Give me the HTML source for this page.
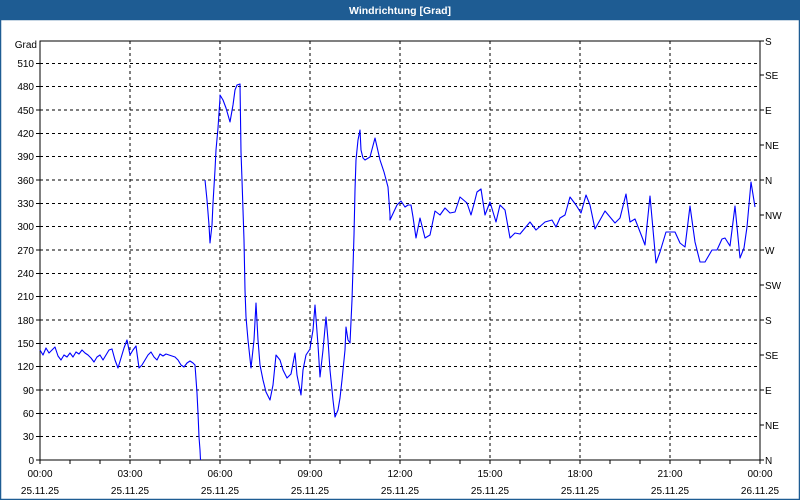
<!DOCTYPE html>
<html><head><meta charset="utf-8"><style>
html,body{margin:0;padding:0;background:#fff}
svg{display:block}
text{font-family:"Liberation Sans",sans-serif;font-size:10px;fill:#000}
</style></head><body>
<svg width="800" height="500" viewBox="0 0 800 500" xmlns="http://www.w3.org/2000/svg">
<rect x="0" y="0" width="800" height="500" fill="#fff"/>
<rect x="0" y="0" width="800" height="20" fill="#1e5c93"/>
<rect x="0.5" y="19.5" width="799" height="480" fill="none" stroke="#1e5c93" stroke-width="1.5"/>
<text x="400" y="14" text-anchor="middle" style="font-weight:bold;fill:#fff;font-size:10.5px">Windrichtung [Grad]</text>
<g stroke="#000" stroke-width="1" stroke-dasharray="3,3" fill="none" shape-rendering="crispEdges">
<path d="M40 436.7H760M40 413.3H760M40 390H760M40 366.7H760M40 343.3H760M40 320H760M40 296.7H760M40 273.3H760M40 250H760M40 226.7H760M40 203.3H760M40 180H760M40 156.7H760M40 133.3H760M40 110H760M40 86.7H760M40 63.3H760"/>
<path d="M130 41V460M220 41V460M310 41V460M400 41V460M490 41V460M580 41V460M670 41V460"/>
</g>
<g stroke="#000" stroke-width="1" fill="none" shape-rendering="crispEdges">
<path d="M40 41H760V460H40ZM36 460H40M36 436.7H40M36 413.3H40M36 390H40M36 366.7H40M36 343.3H40M36 320H40M36 296.7H40M36 273.3H40M36 250H40M36 226.7H40M36 203.3H40M36 180H40M36 156.7H40M36 133.3H40M36 110H40M36 86.7H40M36 63.3H40"/>
<path d="M760 41H764M760 75H764M760 110H764M760 145H764M760 180H764M760 215H764M760 250H764M760 285H764M760 320H764M760 355H764M760 390H764M760 425H764M760 460H764"/>
<path d="M40 460V464M70 460V464M100 460V464M130 460V464M160 460V464M190 460V464M220 460V464M250 460V464M280 460V464M310 460V464M340 460V464M370 460V464M400 460V464M430 460V464M460 460V464M490 460V464M520 460V464M550 460V464M580 460V464M610 460V464M640 460V464M670 460V464M700 460V464M730 460V464M760 460V464"/>
</g>
<g text-anchor="end">
<text x="37" y="48">Grad</text>
<text x="34" y="67">510</text><text x="34" y="90">480</text><text x="34" y="114">450</text><text x="34" y="137">420</text><text x="34" y="160">390</text><text x="34" y="184">360</text><text x="34" y="207">330</text><text x="34" y="230">300</text><text x="34" y="254">270</text><text x="34" y="277">240</text><text x="34" y="300">210</text><text x="34" y="324">180</text><text x="34" y="347">150</text><text x="34" y="370">120</text><text x="34" y="394">90</text><text x="34" y="417">60</text><text x="34" y="440">30</text><text x="34" y="464">0</text>
</g>
<g>
<text x="765" y="45">S</text><text x="765" y="79">SE</text><text x="765" y="114">E</text><text x="765" y="149">NE</text><text x="765" y="184">N</text><text x="765" y="219">NW</text><text x="765" y="254">W</text><text x="765" y="289">SW</text><text x="765" y="324">S</text><text x="765" y="359">SE</text><text x="765" y="394">E</text><text x="765" y="429">NE</text><text x="765" y="464">N</text>
</g>
<g text-anchor="middle">
<text x="40" y="477">00:00</text><text x="130" y="477">03:00</text><text x="220" y="477">06:00</text><text x="310" y="477">09:00</text><text x="400" y="477">12:00</text><text x="490" y="477">15:00</text><text x="580" y="477">18:00</text><text x="670" y="477">21:00</text><text x="760" y="477">00:00</text>
<text x="40" y="494">25.11.25</text><text x="130" y="494">25.11.25</text><text x="220" y="494">25.11.25</text><text x="310" y="494">25.11.25</text><text x="400" y="494">25.11.25</text><text x="490" y="494">25.11.25</text><text x="580" y="494">25.11.25</text><text x="670" y="494">25.11.25</text><text x="760" y="494">26.11.25</text>
</g>
<g stroke="#0000ff" stroke-width="1.1" fill="none" stroke-linejoin="round">
<polyline points="40,350 43,355 46,348 49,353 52,350 55,347 58,356 61,360 64,355 67,357 70,353 73,357 76,352 79,354 82,350 85,353 88,355 91,358 94,362 97,357 100,355 103,360 106,355 109,350 112,349 115,360 118,368 121,358 124,348 127,340 130,355 133,350 136,346 139,368 142,365 145,360 148,355 151,352 154,357 157,360 160,354 163,356 166,354 169,355 172,356 175,357 178,360 181,365 184,367 187,363 190,361 193,363 195,365 197,393 198,413 199,437 200,450 200.5,460"/>
<polyline points="205,180 207,200 209,225 210,243 212,225 213,203 215,170 216,150 218,128 220,98 220,95 223,100 226,108 230,122 233,105 235,90 237,85 240,84 241,152 242,180 244,240 245,290 246,317 248,340 251,368 254,340 256,303 258,340 260,365 263,380 266,392 270,400 273,385 276,355 280,360 283,370 287,378 291,374 295,353 297,375 301,395 303,370 306,355 310,349 311,342 313,330 315,305 318,345 320,377 323,350 326,317 328,340 330,370 333,400 335,417 338,410 340,398 342,380 345,350 346,327 348,340 350,343 352,300 354,235 355,190 356,160 358,140 360,130 361,150 363,158 365,160 370,157 375,138 380,160 384,172 388,187 390,215 390,220 397,205 401,201 405,207 408,205 411,205 413,217 416,238 420,218 425,238 430,235 435,211 440,215 445,208 450,213 455,212 460,197 467,203 471,215 475,200 477,192 481,189 485,215 490,202 496,222 500,205 505,210 510,238 515,233 520,234 530,222 536,230 545,222 552,220 556,227 560,218 565,215 570,197 576,205 581,213 586,195 590,205 595,229 605,211 615,223 620,218 626,194 630,222 635,219 642,237 645,245 650,196 656,263 660,252 666,232 675,232 680,243 685,247 690,206 695,242 700,262 705,262 712,250 717,250 722,239 725,238 730,246 735,206 740,258 744,248 747,227 751,182 755,207"/>
</g>
</svg>
</body></html>
